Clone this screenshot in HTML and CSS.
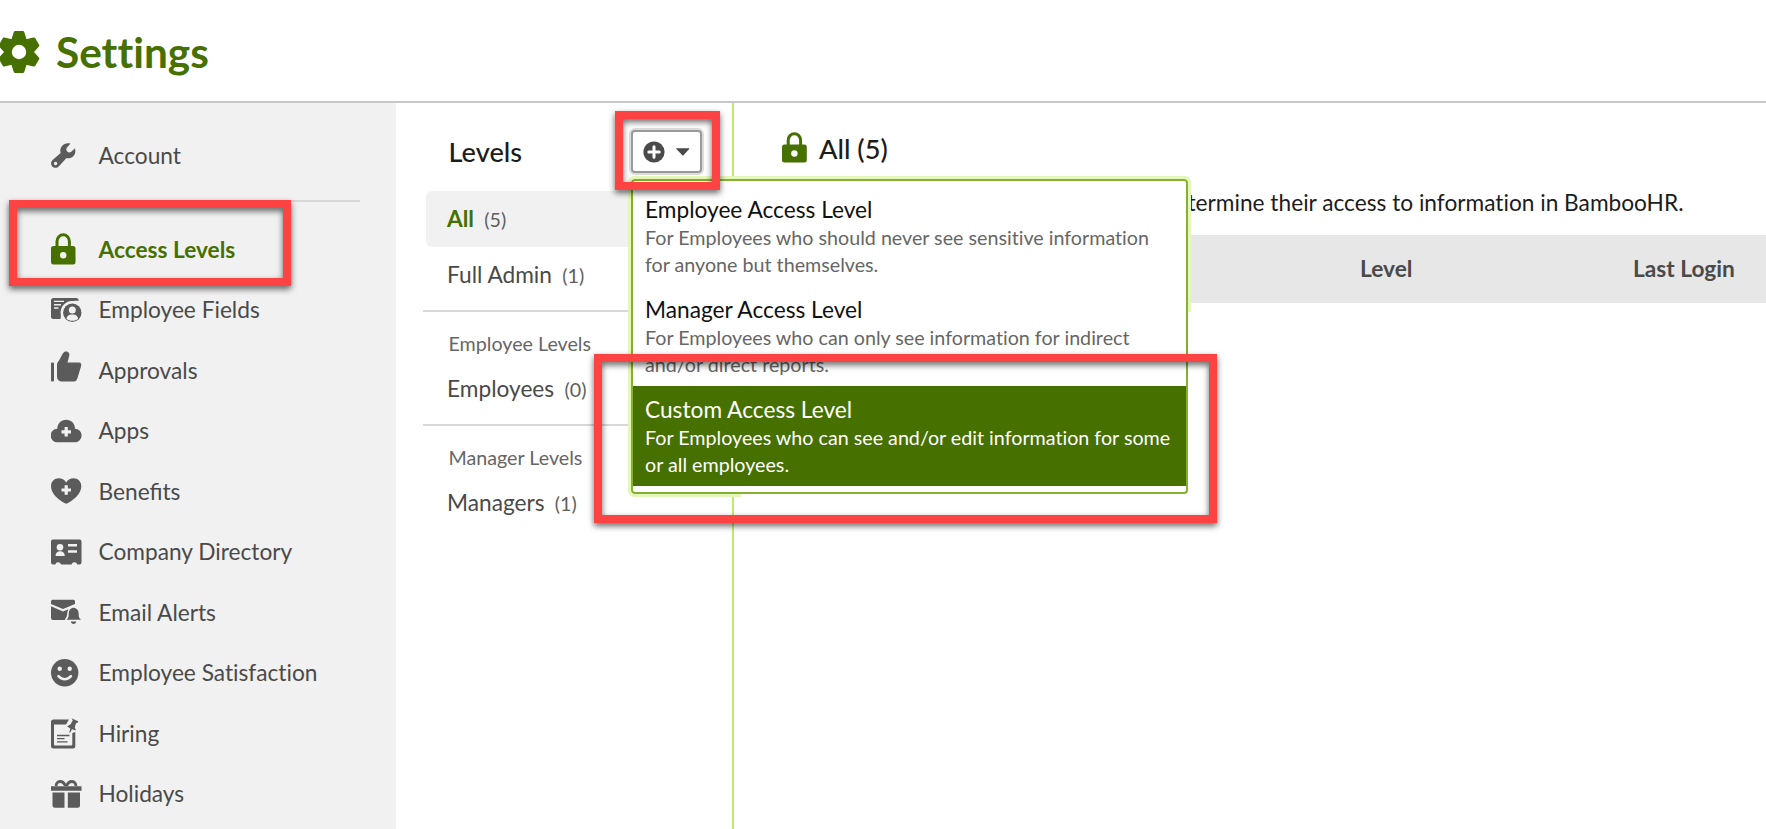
FILE: index.html
```html
<!DOCTYPE html>
<html lang="en">
<head>
  <meta charset="UTF-8">
  <title>Settings</title>
  <link rel="stylesheet" href="styles.css">
</head>
<body>
  <!-- Header -->
  <header class="page-header">
    <svg class="gear" width="42" height="44" viewBox="-21 -22 42 44">
      <g fill="#467000" stroke="#467000" stroke-width="3" stroke-linejoin="round">
        <circle r="12.5"/>
        <path id="tooth" d="M-6.500 -11 L-3.800 -19.500 H3.800 L6.500 -11 V11 L3.800 19.500 H-3.800 L-6.500 11z"/>
        <use href="#tooth" transform="rotate(60)"/>
        <use href="#tooth" transform="rotate(120)"/>
      </g>
      <circle r="7.200" fill="#fff"/>
    </svg>
    <h1>Settings</h1>
  </header>

  <div class="layout">
    <!-- Sidebar -->
    <nav class="sidebar">
      <a class="nav-item">
        <span class="nav-icon"><svg width="25" height="25" viewBox="0 0 25 25"><path fill="#5b5b5b" fill-rule="evenodd" d="M19.500 .6 16 4.400Q14.600 6.300 16 8.200 17.800 10.200 20 9L24 5.200C24.800 8.500 24.200 11.300 22.200 13.200 20.300 15 18 15.600 15.500 15.100L7.900 23.200C6.100 25.200 3 25.200 1.300 23.500-.4 21.700-.3 18.700 1.600 16.900L9.600 10C8.900 7 9.600 4.300 11.700 2.300 13.900.2 16.500-.3 19.500.6zM4.600 18.800a1.700 1.700 0 1 0 0 3.400 1.700 1.700 0 0 0 0-3.400z"/></svg></span>
        <span>Account</span>
      </a>
      <hr class="nav-divider">
      <a class="nav-item selected">
        <span class="nav-icon"><svg width="25" height="32" viewBox="0 0 25 32"><path d="M6 15V8.500a6.200 6.700 0 0 1 12.400 0V15" fill="none" stroke="#467000" stroke-width="3"/><rect y="13" width="24.500" height="18.500" rx="2.500" fill="#467000"/><circle cx="12.200" cy="22.200" r="3.200" fill="#f1f1f1"/></svg></span>
        <span>Access Levels</span>
      </a>
      <a class="nav-item">
        <span class="nav-icon"><svg width="31" height="26" viewBox="0 0 31 26"><path fill="#5b5b5b" d="M2.500 1H25a2.400 2.400 0 0 1 2.500 3C19 2.500 10.500 8 9.500 22H2.500A2.500 2.500 0 0 1 0 19.500v-16A2.500 2.500 0 0 1 2.500 1z"/><path stroke="#f1f1f1" stroke-width="1.400" d="M3 4.400h10M3 7.700h7M3 11h4.500"/><circle cx="21" cy="15.500" r="11.400" fill="#f1f1f1"/><circle cx="21.300" cy="15.800" r="9.200" fill="#5b5b5b"/><circle cx="21.300" cy="12.900" r="3.500" fill="#f1f1f1"/><path fill="#f1f1f1" d="M15.500 22c.2-3.200 2.500-4.600 5.800-4.600s5.600 1.400 5.800 4.600c-3 2.400-8.600 2.400-11.600 0z"/></svg></span>
        <span>Employee Fields</span>
      </a>
      <a class="nav-item">
        <span class="nav-icon up"><svg width="31" height="31" viewBox="0 0 31 31"><path fill="#5b5b5b" d="M0 12.500Q0 11.500 1 11.500H2Q3 11.500 3 12.500V29.500Q3 30.500 2 30.500H1Q0 30.500 0 29.500zM6 14c0-2 1-3 2-4.500L11.800 2.500C13 .4 15 0 16.500.8c1.700.9 2.200 2.400 1.700 4.200L16.500 11.500H28c1.800 0 2.700 1.500 2.200 3.200L26.500 27c-.8 2.500-1.500 3.500-4 3.500H11C8 30.500 6 28.500 6 26z"/></svg></span>
        <span>Approvals</span>
      </a>
      <a class="nav-item">
        <span class="nav-icon"><svg width="31" height="24" viewBox="0 0 31 24"><path fill="#5b5b5b" d="M6.500 23.300A6.700 6.700 0 0 1 6.300 9.700C6.500 4.500 10 .7 15.200.7s8.600 3.700 8.800 9a6.800 6.800 0 0 1-.4 13.600z"/><path stroke="#f1f1f1" stroke-width="3.200" d="M15.200 8v9.500M10.500 12.800h9.500"/></svg></span>
        <span>Apps</span>
      </a>
      <a class="nav-item">
        <span class="nav-icon"><svg width="31" height="26" viewBox="0 0 31 26"><path fill="#5b5b5b" d="M15.200 4.500C17 1.500 19.500.2 22.500.2c4.500 0 7.800 3.500 7.800 8 0 7.500-7.500 13.500-13.300 16.800-1.200.7-2.300.7-3.500 0C7.500 21.700 0 15.700 0 8.200c0-4.500 3.300-8 7.800-8 3 0 5.700 1.300 7.400 4.300z"/><path stroke="#f1f1f1" stroke-width="3.200" d="M15.200 7.300v9.500M10.500 12h9.500"/></svg></span>
        <span class="liga">Benefits</span>
      </a>
      <a class="nav-item">
        <span class="nav-icon"><svg width="31" height="26" viewBox="0 0 31 26"><path fill="#5b5b5b" d="M2 .5H28.500Q30.500.5 30.500 2.500V23.500Q30.500 25.500 28.500 25.500H26.300A3 3 0 0 0 20.500 25.500H10A3 3 0 0 0 4.200 25.500H2Q0 25.500 0 23.500V2.500Q0 .5 2 .5z"/><g fill="#f1f1f1"><circle cx="9" cy="8.200" r="3.300"/><path d="M4.500 17c0-3 2-4.700 4.700-4.700s4.600 1.700 4.600 4.700zM17 5h9v2.500h-9zM17 11.300h9v2.500h-9z"/></g></svg></span>
        <span>Company Directory</span>
      </a>
      <a class="nav-item">
        <span class="nav-icon"><svg width="31" height="26" viewBox="0 0 31 26"><path fill="#5b5b5b" d="M1.500.8H22.500Q24 .8 24 2.500V5L12 10 0 5V2.500Q0 .8 1.500.8zM0 7.300l12 5.200 5.500-2.300c-1.700 2.600-1 7-2.500 8.500-.7.800-1 1.400-.8 2.300H2Q0 21 0 19zM15.500 20.700c2.500-2 2-4 2.300-7 .2-3 2.200-4.500 4.400-5h1c2.500.6 4.200 2.200 4.400 5 .2 3-.2 5 2.600 7zM19.800 22.500h5.500c-.3 3.200-5.200 3.200-5.500 0z"/></svg></span>
        <span>Email Alerts</span>
      </a>
      <a class="nav-item">
        <span class="nav-icon"><svg width="28" height="28" viewBox="0 0 28 28"><circle cx="13.700" cy="13.800" r="13.700" fill="#5b5b5b"/><circle cx="8.700" cy="9.800" r="2.200" fill="#f1f1f1"/><circle cx="18.700" cy="9.800" r="2.200" fill="#f1f1f1"/><path d="M7.500 17.200c3.500 4 9 4 12.400 0" fill="none" stroke="#f1f1f1" stroke-width="2.600" stroke-linecap="round"/></svg></span>
        <span>Employee Satisfaction</span>
      </a>
      <a class="nav-item">
        <span class="nav-icon"><svg width="28" height="31" viewBox="0 0 28 31"><path fill="#5b5b5b" fill-rule="evenodd" d="M2.500 1.500H18L15 6.500H3V26.500Q3 27.500 4 27.500H20Q21.300 27.500 21.300 26.500V15L24.300 14V28Q24.300 30.500 21.800 30.500H2.500Q0 30.500 0 28V4Q0 1.500 2.500 1.500z"/><path stroke="#5b5b5b" stroke-width="1.300" d="M6 17.500h12.500M6 20.700h7.500M6 23.900h10.500"/><path fill="#5b5b5b" d="M20.500.3l7 3.200-1.500 1.800-1-.2-1.200 4.400 1.200 3-4-1.300-2 3.600-.8-.4 1.200-4-3.300-2 3.500-2.200 2.200-4z"/></svg></span>
        <span>Hiring</span>
      </a>
      <a class="nav-item">
        <span class="nav-icon"><svg width="31" height="28" viewBox="0 0 31 28"><path d="M14.500 6C13 2.500 11 1.400 9 1.500 6.500 1.600 5 3.500 5.200 6M15.500 6c1.500-3.500 3.500-4.600 5.500-4.500 2.500.1 4 2 3.800 4.500" fill="none" stroke="#5b5b5b" stroke-width="2.800"/><path fill="#5b5b5b" d="M0 6.300h30.500v4.500H0zM1.500 12.400h12v15.400H4q-2.500 0-2.500-2.500zM16.800 12.400H29v12.900q0 2.500-2.500 2.500h-9.700z"/></svg></span>
        <span>Holidays</span>
      </a>
    </nav>

    <!-- Levels list -->
    <section class="levels">
      <div class="levels-head">
        <h2>Levels</h2>
        <div class="add-wrap">
          <button class="add-button">
            <svg width="22" height="22" viewBox="0 0 22 22"><circle cx="11" cy="11" r="10.600" fill="#4a4a4a"/><path stroke="#fff" stroke-width="3" stroke-linecap="round" d="M11 5.800v10.400M5.800 11h10.400"/></svg>
            <svg width="14" height="8" viewBox="0 0 14 8"><path fill="#4a4a4a" d="M.7.300h12.200q.8 0 .3.700L7.500 7.300q-.6.600-1.200 0L.4 1q-.5-.7.300-.7z"/></svg>
          </button>
          <!-- Add menu -->
          <div class="menu">
            <div class="menu-item">
              <h3>Employee Access Level</h3>
              <p>For Employees who should never see sensitive information<br>for anyone but themselves.</p>
            </div>
            <div class="menu-item">
              <h3>Manager Access Level</h3>
              <p>For Employees who can only see information for indirect<br>and/or direct reports.</p>
            </div>
            <div class="menu-item active">
              <h3>Custom Access Level</h3>
              <p>For Employees who can see and/or edit information for some<br>or all employees.</p>
            </div>
          </div>
        </div>
      </div>
      <div class="level selected"><b>All</b> <small>(5)</small></div>
      <div class="level">Full Admin <small>(1)</small></div>
      <div class="group">
        <h4>Employee Levels</h4>
        <div class="level">Employees <small>(0)</small></div>
      </div>
      <div class="group">
        <h4>Manager Levels</h4>
        <div class="level">Managers <small>(1)</small></div>
      </div>
    </section>

    <!-- Main -->
    <main class="content">
      <h2>
        <svg width="25" height="31" viewBox="0 0 25 31"><path d="M6.200 14V8.200a6.200 6.500 0 0 1 12.400 0V14" fill="none" stroke="#467000" stroke-width="3"/><rect y="12.500" width="24.800" height="18" rx="2.500" fill="#467000"/><circle cx="12.400" cy="21.500" r="3.200" fill="#fff"/></svg>
        <span>All (5)</span>
      </h2>
      <p class="intro">termine their access to information in BambooHR.</p>
      <div class="table-head">
        <span class="col-level">Level</span>
        <span>Last Login</span>
      </div>
    </main>
  </div>

  <!-- Callouts -->
  <div class="callout callout-nav"></div>
  <div class="callout callout-add"></div>
  <div class="callout callout-custom"></div>
</body>
</html>
```

FILE: styles.css
```css
* {
  box-sizing: border-box;
}

body {
  margin: 0;
  height: 829px;
  position: relative;
  overflow: hidden;
  background: #fff;
  color: #1c1c1c;
  font-family: Lato, sans-serif;
  font-size: 22.7px;
  font-variant-ligatures: none;
}

h1, h2, h3, h4, p {
  margin: 0;
  font-weight: 400;
}

svg {
  display: block;
  flex: none;
}

/* header */
.page-header {
  display: flex;
  align-items: center;
  height: 103px;
  border-bottom: 2px solid #c8c8c8;
}

.gear {
  margin: 2px 0 0 -2px;
}

.page-header h1 {
  margin: 3px 0 0 16px;
  color: #467000;
  font-size: 42.400px;
  font-weight: 700;
  line-height: 60px;
}

.layout {
  display: flex;
  height: 726px;
}

/* sidebar */
.sidebar {
  flex: none;
  width: 396px;
  padding-top: 22px;
  background: #f1f1f1;
  overflow: hidden;
}

.nav-item {
  display: flex;
  align-items: center;
  height: 60.500px;
  padding-left: 51px;
  color: #4a4a4a;
}

.nav-icon {
  width: 47.500px;
}

.nav-icon.up {
  margin-top: -7px;
}

.nav-item.selected {
  color: #467000;
  font-weight: 700;
}

.liga {
  font-variant-ligatures: normal;
}

.nav-divider {
  height: 2px;
  margin: 14px 36px 17.700px 51px;
  border: 0;
  background: #d8d8d8;
}

/* levels list */
.levels {
  flex: none;
  width: 338px;
  padding-left: 27px;
  border-right: 2px solid #c4e86c;
}

.levels-head {
  display: flex;
  justify-content: space-between;
  height: 88px;
  padding: 27px 30px 0 25.500px;
}

.levels-head h2 {
  font-size: 27.200px;
  font-weight: 500;
  line-height: 44px;
}

.add-wrap {
  position: relative;
  width: 71px;
}

.add-button {
  display: flex;
  align-items: center;
  justify-content: space-between;
  width: 71px;
  height: 43px;
  padding: 0 10px;
  border: 2px solid #999;
  border-radius: 4px;
  background: #fff;
  box-shadow: 0 0 0 2px #dcdcdc;
}

.level {
  height: 56px;
  padding-left: 24px;
  line-height: 56px;
  color: #4a4a4a;
}

.level small {
  margin-left: 4.500px;
  font-size: 19.700px;
  color: #5e5e5e;
}

.level.selected {
  margin-left: 3px;
  padding-left: 21px;
  border-radius: 6px;
  background: #f1f1f1;
}

.level b {
  color: #467000;
}

.group {
  height: 113.500px;
  padding-top: 15px;
  border-top: 2px solid #d8d8d8;
}

.level + .group {
  margin-top: 7px;
}

.group h4 {
  padding-left: 25.500px;
  font-size: 19.700px;
  line-height: 34px;
  color: #666;
}

/* add menu */
.menu {
  position: absolute;
  top: 49px;
  left: 0;
  z-index: 1;
  width: 557px;
  height: 315px;
  padding-top: 4.500px;
  border: 2px solid #86b030;
  border-radius: 4px;
  background: #fff;
}

.menu::before {
  content: "";
  position: absolute;
  z-index: -1;
  inset: -5px;
  border: 3px solid #e4f6b9;
  border-radius: 6px;
  clip-path: polygon(0 0, 100% 0, 100% 136px, 50% 136px, 113px 200px, 113px 100%, 0 100%);
}

.menu-item {
  height: 100px;
  padding: 9px 0 0 12px;
}

.menu-item h3 {
  font-size: 22.700px;
  line-height: 30px;
  color: #111;
}

.menu-item p {
  margin-top: -1px;
  font-size: 19.700px;
  line-height: 27.500px;
  color: #666;
  white-space: nowrap;
}

.menu-item.active {
  background: #467000;
}

.menu-item.active h3,
.menu-item.active p {
  color: #fff;
}

/* main */
.content {
  flex: 1;
  padding-left: 48px;
}

.content h2 {
  display: flex;
  align-items: center;
  gap: 12px;
  height: 88px;
  font-size: 27.200px;
  font-weight: 500;
}

.content h2 span {
  padding-top: 2px;
}

.intro {
  height: 44px;
  padding-left: 405.500px;
  line-height: 24px;
  white-space: nowrap;
}

.table-head {
  display: flex;
  height: 68px;
  padding-left: 578px;
  background: #e7e7e7;
  color: #4a4a4a;
  font-weight: 700;
  line-height: 68px;
}

.col-level {
  width: 273px;
}

/* callouts */
.callout {
  position: absolute;
  z-index: 2;
  border: 8px solid #ff4343;
  filter: drop-shadow(0 3px 3px rgba(0, 0, 0, 0.6));
}

.callout-nav {
  top: 200px;
  left: 9px;
  width: 282px;
  height: 86px;
}

.callout-add {
  top: 111px;
  left: 615px;
  width: 105px;
  height: 79px;
}

.callout-custom {
  top: 354px;
  left: 594px;
  width: 623px;
  height: 169px;
}
```
